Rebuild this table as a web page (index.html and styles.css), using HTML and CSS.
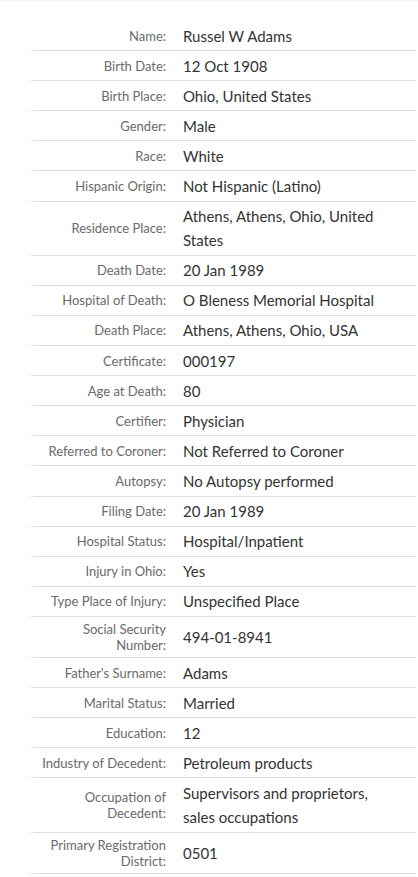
FILE: index.html
```html
<!DOCTYPE html>
<html lang="en">
<head>
<meta charset="utf-8">
<title>Record</title>
<link rel="stylesheet" href="styles.css">
</head>
<body>
<div class="page">
  <div class="record">
    <div class="row"><div class="label">Name:</div><div class="value">Russel W Adams</div></div>
    <div class="row"><div class="label">Birth Date:</div><div class="value">12 Oct 1908</div></div>
    <div class="row"><div class="label">Birth Place:</div><div class="value">Ohio, United States</div></div>
    <div class="row"><div class="label">Gender:</div><div class="value">Male</div></div>
    <div class="row"><div class="label">Race:</div><div class="value">White</div></div>
    <div class="row"><div class="label">Hispanic Origin:</div><div class="value">Not Hispanic (Latino)</div></div>
    <div class="row"><div class="label">Residence Place:</div><div class="value">Athens, Athens, Ohio, United States</div></div>
    <div class="row"><div class="label">Death Date:</div><div class="value">20 Jan 1989</div></div>
    <div class="row"><div class="label">Hospital of Death:</div><div class="value">O Bleness Memorial Hospital</div></div>
    <div class="row"><div class="label">Death Place:</div><div class="value">Athens, Athens, Ohio, USA</div></div>
    <div class="row"><div class="label">Certificate:</div><div class="value">000197</div></div>
    <div class="row"><div class="label">Age at Death:</div><div class="value">80</div></div>
    <div class="row"><div class="label">Certifier:</div><div class="value">Physician</div></div>
    <div class="row"><div class="label">Referred to Coroner:</div><div class="value">Not Referred to Coroner</div></div>
    <div class="row"><div class="label">Autopsy:</div><div class="value">No Autopsy performed</div></div>
    <div class="row"><div class="label">Filing Date:</div><div class="value">20 Jan 1989</div></div>
    <div class="row"><div class="label">Hospital Status:</div><div class="value">Hospital/Inpatient</div></div>
    <div class="row"><div class="label">Injury in Ohio:</div><div class="value">Yes</div></div>
    <div class="row"><div class="label">Type Place of Injury:</div><div class="value">Unspecified Place</div></div>
    <div class="row"><div class="label">Social Security Number:</div><div class="value">494-01-8941</div></div>
    <div class="row"><div class="label">Father's Surname:</div><div class="value">Adams</div></div>
    <div class="row"><div class="label">Marital Status:</div><div class="value">Married</div></div>
    <div class="row"><div class="label">Education:</div><div class="value">12</div></div>
    <div class="row"><div class="label">Industry of Decedent:</div><div class="value">Petroleum products</div></div>
    <div class="row"><div class="label">Occupation of Decedent:</div><div class="value">Supervisors and proprietors, sales occupations</div></div>
    <div class="row"><div class="label">Primary Registration District:</div><div class="value">0501</div></div>
  </div>
</div>
</body>
</html>
```

FILE: styles.css
```css
html, body {
  margin: 0;
  padding: 0;
  background: #ffffff;
}

body {
  font-family: Lato, "Liberation Sans", sans-serif;
  border-top: 1px solid #f3f3f3;
}

.page {
  padding: 20px 2px 0 27px;
}

.record {
  display: flex;
  flex-direction: column;
}

.row {
  display: grid;
  grid-template-columns: 139px 1fr;
  column-gap: 17px;
  align-items: center;
  padding: 2.5px 0;
  border-bottom: 1px solid transparent;
  background:
    linear-gradient(to right, rgba(221,221,221,0) 0, #dddddd 10px, #dddddd 100%) bottom left / 100% 1px no-repeat;
  background-origin: border-box;
}

.label {
  text-align: right;
  font-size: 13px;
  line-height: 16px;
  padding: 1.6px 0 1.6px 10px;
  color: #6a6a6a;
}

.value {
  font-size: 15px;
  line-height: 24.1px;
  color: #333333;
  max-width: 215px;
}
```
